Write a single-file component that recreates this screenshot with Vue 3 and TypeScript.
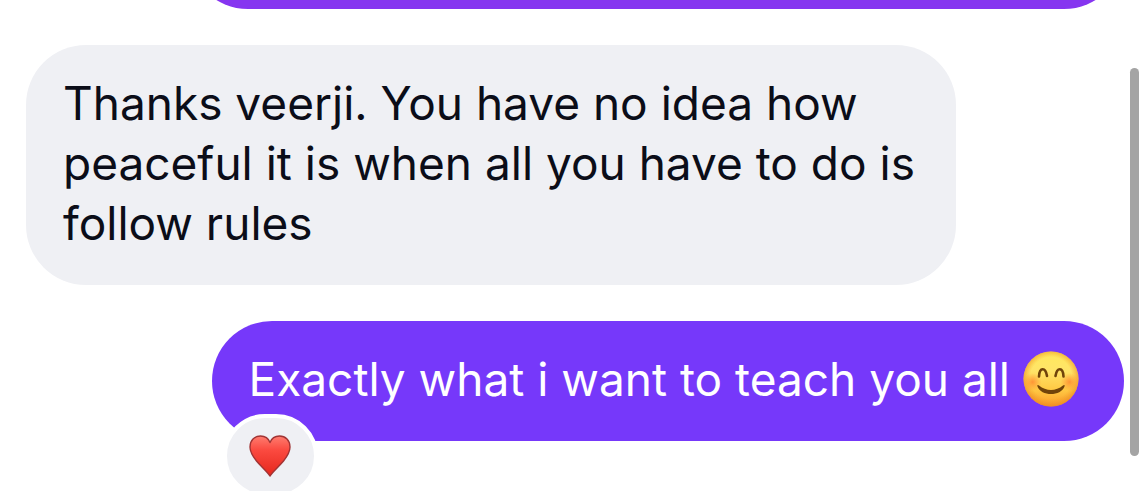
<script setup lang="ts">
interface Message {
  id: number
  kind: 'previous' | 'incoming' | 'outgoing'
  lines: string[]
  smile?: boolean
  reaction?: boolean
}

const messages: Message[] = [
  { id: 1, kind: 'previous', lines: [] },
  {
    id: 2,
    kind: 'incoming',
    lines: [
      'Thanks veerji. You have no idea how',
      'peaceful it is when all you have to do is',
      'follow rules',
    ],
  },
  {
    id: 3,
    kind: 'outgoing',
    lines: ['Exactly what i want to teach you all'],
    smile: true,
    reaction: true,
  },
]
</script>

<template>
  <main class="chat">
    <article v-for="m in messages" :key="m.id" class="bubble" :class="m.kind">
      <p v-if="m.lines.length" class="text">
        <span v-for="line in m.lines" :key="line" class="line">{{ line }}</span>
      </p>
      <svg v-if="m.smile" class="smile" viewBox="0 0 56 56" role="img" aria-label="Smiling face">
        <defs>
          <linearGradient id="face" x1="0" y1="0" x2="0" y2="1">
            <stop offset="0" stop-color="#ffe95c" />
            <stop offset="0.35" stop-color="#ffe468" />
            <stop offset="0.7" stop-color="#ffc843" />
            <stop offset="1" stop-color="#f99a2a" />
          </linearGradient>
          <radialGradient id="rim" cx="0.5" cy="0.48" r="0.54">
            <stop offset="0.7" stop-color="#f39a25" stop-opacity="0" />
            <stop offset="1" stop-color="#ea8420" stop-opacity="0.8" />
          </radialGradient>
          <radialGradient id="cheek">
            <stop offset="0" stop-color="#ff7a2a" stop-opacity="0.7" />
            <stop offset="1" stop-color="#ff8b2e" stop-opacity="0" />
          </radialGradient>
        </defs>
        <circle cx="28" cy="28" r="27.5" fill="url(#face)" />
        <circle cx="28" cy="28" r="27.5" fill="url(#rim)" />
        <circle cx="9.5" cy="31" r="9" fill="url(#cheek)" />
        <circle cx="46.500" cy="31" r="9" fill="url(#cheek)" />
        <g fill="none" stroke="#70430a" stroke-linecap="round">
          <path d="M16 25.500C16.500 16 22.500 16 24 25" stroke-width="2.600" />
          <path d="M32.500 25C34 16 40 16 40.500 25.500" stroke-width="2.600" />
        </g>
        <path d="M14.500 35.500C14 34 15 33.700 16 34.600C23 40.500 33 40.500 40 34.600C41 33.700 42 34 41.500 35.500C38 45.500 18 45.500 14.500 35.500Z" fill="#70430a" />
      </svg>
      <button v-if="m.reaction" class="reaction" type="button" aria-label="Heart reaction">
        <svg class="heart" viewBox="0 0 42 42" aria-hidden="true">
          <defs>
            <linearGradient id="love" x1="0" y1="0" x2="0" y2="1">
              <stop offset="0" stop-color="#ff7d70" />
              <stop offset="0.35" stop-color="#fb4a40" />
              <stop offset="1" stop-color="#e5261c" />
            </linearGradient>
          </defs>
          <path
            d="M21 41C18 36.500 12 31.500 7.500 26C3.500 21 1 17 1 12C1 5.500 5.500 1 11.500 1C16 1 19.500 3.500 21 7.500C22.500 3.500 26 1 30.500 1C36.500 1 41 5.500 41 12C41 17 38.500 21 34.500 26C30 31.500 24 36.500 21 41Z"
            fill="url(#love)"
            stroke="#a13434"
            stroke-width="1.400"
            stroke-linejoin="round"
          />
        </svg>
      </button>
    </article>
    <div class="scroll-thumb" aria-hidden="true"></div>
  </main>
</template>

<style>
body {
  margin: 0;
  background: #fff;
}
</style>

<style scoped>
.chat {
  position: relative;
  box-sizing: border-box;
  height: 100vh;
  padding: 0 24px 50px 26px;
  display: flex;
  flex-direction: column;
  justify-content: flex-end;
  gap: 36px;
  overflow: hidden;
  background: #fff;
  font-family: Inter, "Liberation Sans", sans-serif;
  font-size: 46px;
  line-height: 60px;
}

.bubble {
  position: relative;
  flex: none;
  box-sizing: border-box;
  min-height: 120px;
  padding: 28px 41px 32px 37px;
  border-radius: 60px;
}

.previous {
  align-self: stretch;
  margin-left: 162px;
  background: #8635f0;
}

.incoming {
  align-self: flex-start;
  background: #eff0f4;
  color: #0b0d18;
}

.outgoing {
  align-self: flex-end;
  display: flex;
  align-items: center;
  gap: 13px;
  padding-right: 45px;
  background: #7638fa;
  color: #fff;
}

.text {
  margin: 0;
}

.line {
  display: block;
  white-space: nowrap;
}

.smile {
  flex: none;
  width: 56px;
  height: 56px;
}

.reaction {
  position: absolute;
  left: 11px;
  top: 93px;
  box-sizing: border-box;
  width: 95px;
  height: 84px;
  padding: 0;
  display: flex;
  align-items: center;
  justify-content: center;
  border: 4px solid #fff;
  border-radius: 42px;
  background: #eff0f4;
}

.heart {
  width: 42px;
  height: 42px;
}

.scroll-thumb {
  position: absolute;
  top: 68px;
  right: 9px;
  bottom: 35px;
  width: 9px;
  border-radius: 5px;
  background: #a4a4a4;
}
</style>
